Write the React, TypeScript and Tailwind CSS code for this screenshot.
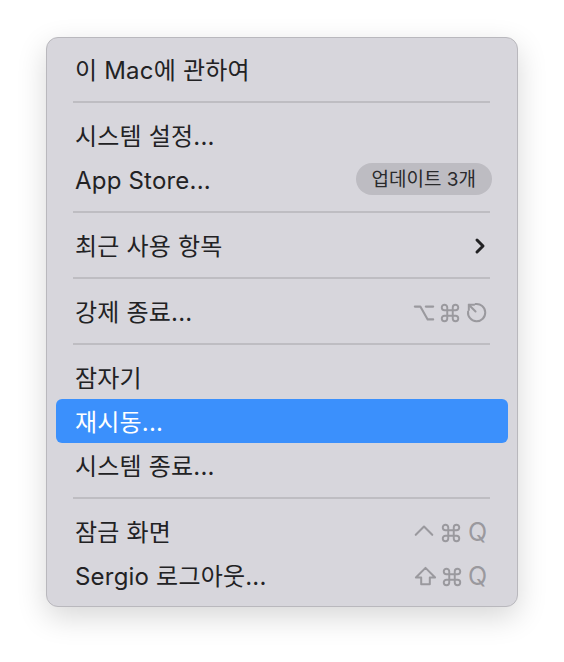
import { ChevronRight } from "lucide-react";

const font = { fontFamily: '"Inter", "Noto Sans CJK KR", sans-serif' };

function CmdIcon() {
  return (
    <svg width="22" height="22" viewBox="0 0 24 24" fill="none" stroke="currentColor" strokeWidth="2.1" strokeLinecap="round" strokeLinejoin="round">
      <path d="M15 6v12a3 3 0 1 0 3-3H6a3 3 0 1 0 3 3V6a3 3 0 1 0-3 3h12a3 3 0 1 0-3-3" />
    </svg>
  );
}

function OptIcon() {
  return (
    <svg width="22" height="22" viewBox="0 0 24 24" fill="none" stroke="currentColor" strokeWidth="2.3" strokeLinecap="round" strokeLinejoin="round">
      <path d="M2 5h6l8 14h6" />
      <path d="M14 5h8" />
    </svg>
  );
}

function EscIcon() {
  return (
    <svg width="23" height="23" viewBox="0 0 24 24" fill="none" stroke="currentColor" strokeWidth="2.1" strokeLinecap="round" strokeLinejoin="round">
      <path d="M11 3.2A9 9 0 1 1 3.2 11" />
      <path d="M11 11L4 4" />
      <path d="M4 9.5V4h5.5" />
    </svg>
  );
}

function CtrlIcon() {
  return (
    <svg width="22" height="22" viewBox="0 0 24 24" fill="none" stroke="currentColor" strokeWidth="2.3" strokeLinecap="round" strokeLinejoin="round">
      <path d="M3 14l9-9 9 9" />
    </svg>
  );
}

function ShiftIcon() {
  return (
    <svg width="23" height="23" viewBox="0 0 24 24" fill="none" stroke="currentColor" strokeWidth="2.1" strokeLinejoin="round">
      <path d="M12 3L2 13h5.5v7h9v-7H22z" />
    </svg>
  );
}

function Row({ label, active, children }: { label: string; active?: boolean; children?: React.ReactNode }) {
  return (
    <div
      className={
        "flex h-[44px] items-center justify-between rounded-[6px] pl-[19px] pr-[20px] " +
        (active ? "bg-[#3b90fc] text-white" : "text-[#222224]")
      }
    >
      <span className="pt-[4px] text-[24px] leading-none tracking-[0.2px]">{label}</span>
      {children}
    </div>
  );
}

function Sep() {
  return (
    <div className="flex h-[22px] items-center px-[17px] pr-[18px]">
      <div className="h-[2px] w-full bg-[#bebdc2]" />
    </div>
  );
}

export default function App() {
  return (
    <div className="min-h-screen bg-white pl-[46px] pt-[37px]" style={font}>
      <div className="w-[472px] rounded-[12px] border border-[#b9b8bd] bg-[#d7d6dc] px-[9px] py-[9px] shadow-[0_10px_30px_rgba(0,0,0,0.16)]">
        <Row label="이 Mac에 관하여" />
        <Sep />
        <Row label="시스템 설정..." />
        <Row label="App Store...">
          <span className="-mr-[4px] flex h-[32px] items-center rounded-full bg-[#bdbcc2] px-[16px] pt-[2px] text-[19px] text-[#2a2a2c]">
            업데이트 3개
          </span>
        </Row>
        <Sep />
        <Row label="최근 사용 항목">
          <ChevronRight size={24} strokeWidth={3} className="-mr-[4px] mt-[2px] text-[#222224]" />
        </Row>
        <Sep />
        <Row label="강제 종료...">
          <span className="mt-[3px] flex items-center gap-[4px] text-[#9a999e]">
            <OptIcon />
            <CmdIcon />
            <EscIcon />
          </span>
        </Row>
        <Sep />
        <Row label="잠자기" />
        <Row label="재시동..." active />
        <Row label="시스템 종료..." />
        <Sep />
        <Row label="잠금 화면">
          <span className="mt-[3px] flex items-center gap-[5px] text-[#9a999e]">
            <CtrlIcon />
            <CmdIcon />
            <span className="w-[21px] text-center text-[25px] leading-none">Q</span>
          </span>
        </Row>
        <Row label="Sergio 로그아웃...">
          <span className="mt-[3px] flex items-center gap-[4px] text-[#9a999e]">
            <ShiftIcon />
            <CmdIcon />
            <span className="w-[21px] text-center text-[25px] leading-none">Q</span>
          </span>
        </Row>
      </div>
    </div>
  );
}
